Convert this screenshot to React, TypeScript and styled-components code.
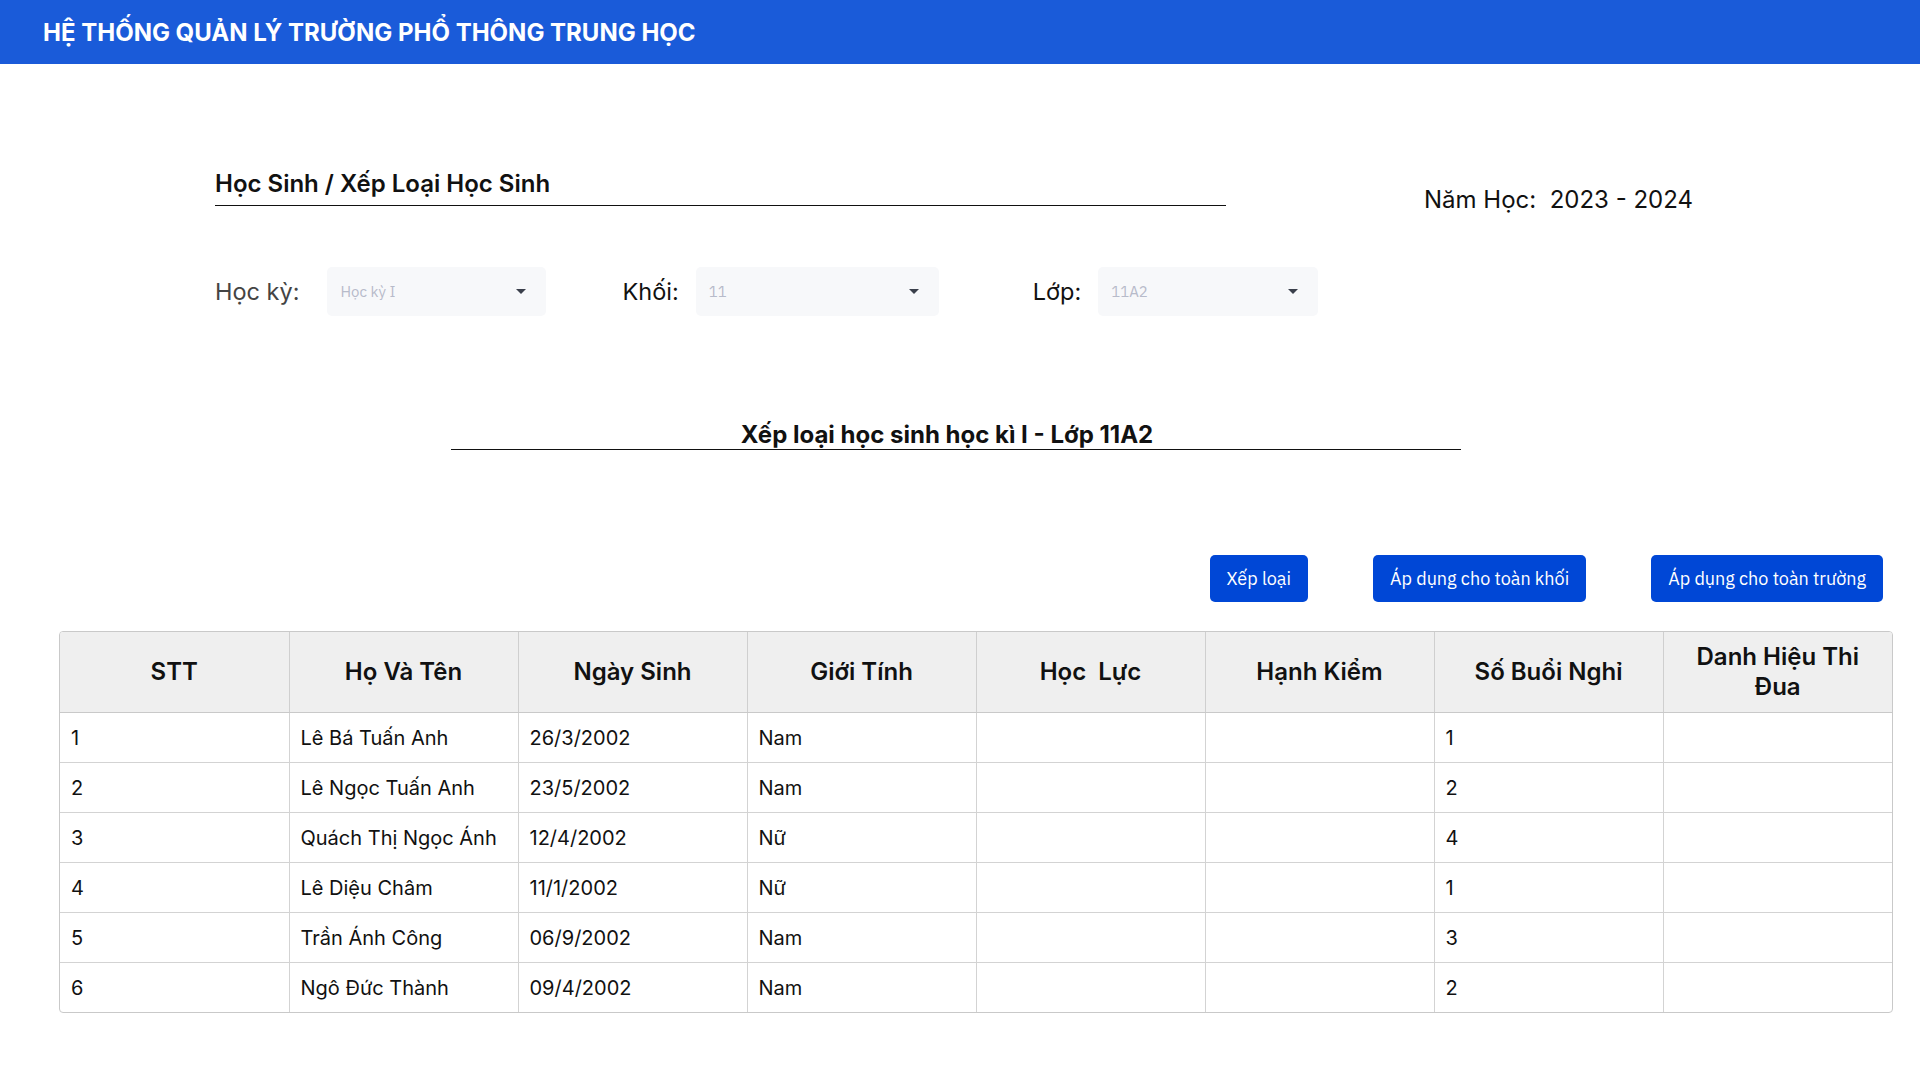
import React from 'react';
import styled, { createGlobalStyle } from 'styled-components';

interface Student {
  stt: number;
  name: string;
  dob: string;
  gender: string;
  absent: number;
}

const students: Student[] = [
  { stt: 1, name: 'Lê Bá Tuấn Anh', dob: '26/3/2002', gender: 'Nam', absent: 1 },
  { stt: 2, name: 'Lê Ngọc Tuấn Anh', dob: '23/5/2002', gender: 'Nam', absent: 2 },
  { stt: 3, name: 'Quách Thị Ngọc Ánh', dob: '12/4/2002', gender: 'Nữ', absent: 4 },
  { stt: 4, name: 'Lê Diệu Châm', dob: '11/1/2002', gender: 'Nữ', absent: 1 },
  { stt: 5, name: 'Trần Ánh Công', dob: '06/9/2002', gender: 'Nam', absent: 3 },
  { stt: 6, name: 'Ngô Đức Thành', dob: '09/4/2002', gender: 'Nam', absent: 2 },
];

const headers = [
  'STT',
  'Họ Và Tên',
  'Ngày Sinh',
  'Giới Tính',
  'Học  Lực',
  'Hạnh Kiểm',
  'Số Buổi Nghỉ',
  'Danh Hiệu Thi Đua',
];

const GlobalStyle = createGlobalStyle`
  body {
    margin: 0;
    background: #fff;
    font-family: Inter, "Noto Sans", sans-serif;
    color: #111;
  }
`;

const SelectBox = ({ value, width }: { value: string; width: number }) => (
  <Select style={{ width }}>
    <SelectValue>{value}</SelectValue>
    <Caret />
  </Select>
);

const App = () => {
  return (
    <>
      <GlobalStyle />
      <Header>
        <HeaderTitle>HỆ THỐNG QUẢN LÝ TRƯỜNG PHỔ THÔNG TRUNG HỌC</HeaderTitle>
      </Header>
      <Main>
        <TopRow>
          <Breadcrumb>Học Sinh / Xếp Loại Học Sinh</Breadcrumb>
          <SchoolYear>Năm Học:&nbsp; 2023 - 2024</SchoolYear>
        </TopRow>
        <Filters>
          <FilterGroup>
            <FilterLabel muted gap={28}>Học kỳ:</FilterLabel>
            <SelectBox value="Học kỳ I" width={219} />
          </FilterGroup>
          <FilterGroup offset={76}>
            <FilterLabel gap={17}>Khối:</FilterLabel>
            <SelectBox value="11" width={243} />
          </FilterGroup>
          <FilterGroup offset={94}>
            <FilterLabel gap={17}>Lớp:</FilterLabel>
            <SelectBox value="11A2" width={220} />
          </FilterGroup>
        </Filters>
        <SectionTitleWrap>
          <SectionTitle>Xếp loại học sinh học kì I - Lớp 11A2</SectionTitle>
        </SectionTitleWrap>
        <Actions>
          <ActionButton>Xếp loại</ActionButton>
          <ActionButton>Áp dụng cho toàn khối</ActionButton>
          <ActionButton>Áp dụng cho toàn trường</ActionButton>
        </Actions>
        <TableWrap>
          <Table>
            <thead>
              <tr>
                {headers.map((h) => (
                  <HeadCell key={h}>{h}</HeadCell>
                ))}
              </tr>
            </thead>
            <tbody>
              {students.map((s) => (
                <tr key={s.stt}>
                  <BodyCell>{s.stt}</BodyCell>
                  <BodyCell>{s.name}</BodyCell>
                  <BodyCell>{s.dob}</BodyCell>
                  <BodyCell>{s.gender}</BodyCell>
                  <BodyCell />
                  <BodyCell />
                  <BodyCell>{s.absent}</BodyCell>
                  <BodyCell />
                </tr>
              ))}
            </tbody>
          </Table>
        </TableWrap>
      </Main>
    </>
  );
};

const Header = styled.header`
  height: 64px;
  background: #1a5bd9;
  display: flex;
  align-items: center;
  padding-left: 43px;
`;

const HeaderTitle = styled.h1`
  margin: 0;
  color: #fff;
  font-size: 24px;
  font-weight: 700;
`;

const Main = styled.main`
  padding: 0 27px 0 59px;
`;

const TopRow = styled.div`
  display: flex;
  align-items: flex-start;
  padding-top: 104px;
  padding-left: 156px;
`;

const Breadcrumb = styled.div`
  width: 1011px;
  font-size: 24px;
  font-weight: 600;
  line-height: 32px;
  padding-bottom: 5px;
  border-bottom: 1.5px solid #111;
`;

const SchoolYear = styled.div`
  margin-left: 198px;
  margin-top: 17px;
  font-size: 24px;
  line-height: 30px;
  color: #111;
`;

const Filters = styled.div`
  display: flex;
  align-items: center;
  margin-top: 52px;
  padding-left: 156px;
`;

const FilterGroup = styled.div<{ offset?: number }>`
  display: flex;
  align-items: center;
  margin-left: ${(p) => p.offset ?? 0}px;
`;

const FilterLabel = styled.span<{ muted?: boolean; gap: number }>`
  font-size: 23.5px;
  color: ${(p) => (p.muted ? '#444' : '#111')};
  margin-right: ${(p) => p.gap}px;
`;

const Select = styled.div`
  height: 49px;
  box-sizing: border-box;
  background: #f7f8fa;
  border-radius: 5px;
  display: flex;
  align-items: center;
  justify-content: space-between;
  padding: 0 20px 0 13px;
`;

const SelectValue = styled.span`
  font-family: "IBM Plex Sans", Inter, sans-serif;
  font-size: 15px;
  color: #b7bbca;
`;

const Caret = styled.span`
  width: 0;
  height: 0;
  border-left: 5px solid transparent;
  border-right: 5px solid transparent;
  border-top: 5px solid #3a3f4b;
`;

const SectionTitleWrap = styled.div`
  display: flex;
  justify-content: center;
  margin-top: 105px;
  padding-right: 40px;
`;

const SectionTitle = styled.h2`
  margin: 0;
  width: 1010px;
  box-sizing: border-box;
  padding: 0 18px 0 0;
  text-align: center;
  font-size: 24px;
  font-weight: 700;
  line-height: 28px;
  border-bottom: 1.5px solid #111;
`;

const Actions = styled.div`
  display: flex;
  justify-content: flex-end;
  gap: 65px;
  margin-top: 105px;
  padding-right: 10px;
`;

const ActionButton = styled.button`
  height: 47px;
  padding: 0 17px;
  border: none;
  border-radius: 5px;
  background: #0047d6;
  color: #fff;
  font-family: "IBM Plex Sans", Inter, sans-serif;
  font-size: 18px;
  cursor: pointer;
`;

const TableWrap = styled.div`
  margin-top: 29px;
  border: 1px solid #c9c9c9;
  border-radius: 4px;
  overflow: hidden;
`;

const Table = styled.table`
  width: 100%;
  border-collapse: collapse;
  table-layout: fixed;
`;

const HeadCell = styled.th`
  height: 80px;
  background: #efefef;
  font-size: 24px;
  font-weight: 600;
  line-height: 30px;
  text-align: center;
  white-space: pre-wrap;
  padding: 0 20px;
  border-right: 1px solid #cfcfcf;
  border-bottom: 1px solid #c9c9c9;

  &:last-child {
    border-right: none;
  }
`;

const BodyCell = styled.td`
  height: 49px;
  font-size: 20px;
  padding: 0 11px;
  border-right: 1px solid #d3d3d3;
  border-bottom: 1px solid #d3d3d3;

  &:last-child {
    border-right: none;
  }

  tr:last-child > & {
    border-bottom: none;
  }
`;

export default App;
